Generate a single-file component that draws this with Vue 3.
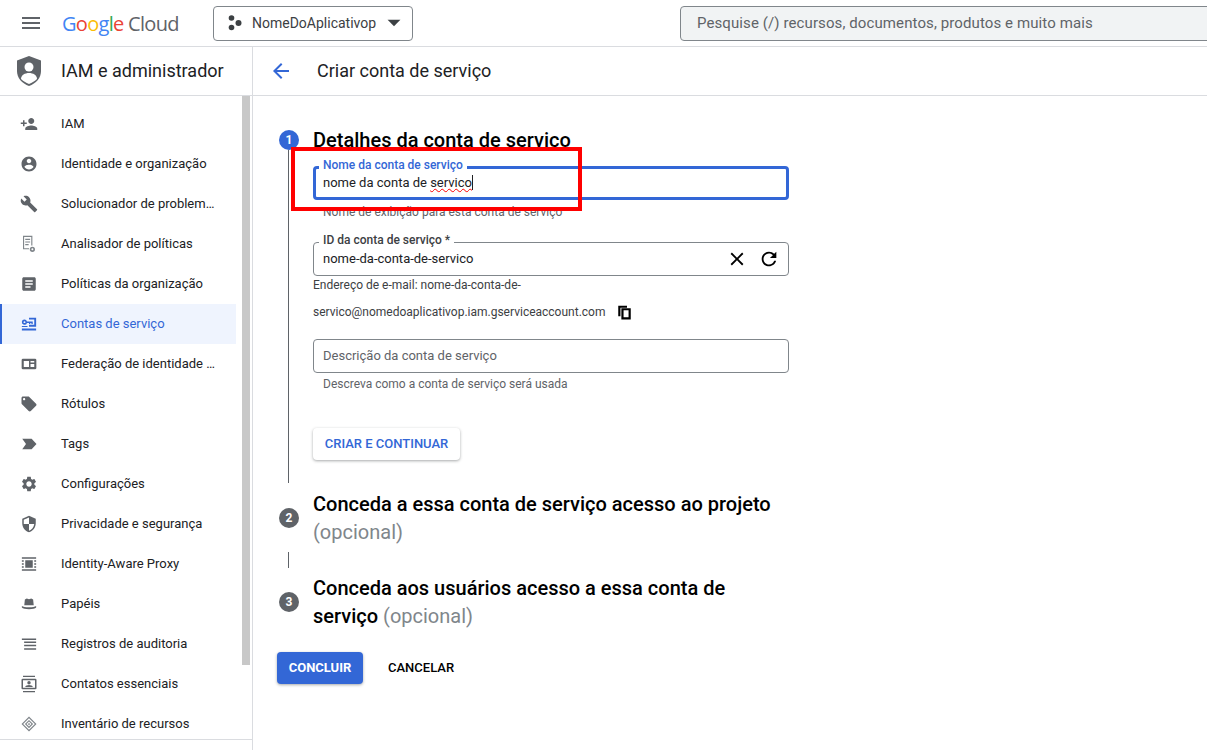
<script setup>
const nav = [
  { label: 'IAM', d: 'M15 12c2.21 0 4-1.79 4-4s-1.79-4-4-4-4 1.79-4 4 1.79 4 4 4zm-9-2V7H4v3H1v2h3v3h2v-3h3v-2H6zm9 4c-2.67 0-8 1.34-8 4v2h16v-2c0-2.66-5.33-4-8-4z' },
  { label: 'Identidade e organização', d: 'M12 2C6.48 2 2 6.48 2 12s4.48 10 10 10 10-4.48 10-10S17.52 2 12 2zm0 3c1.66 0 3 1.34 3 3s-1.34 3-3 3-3-1.34-3-3 1.34-3 3-3zm0 14.2c-2.5 0-4.71-1.28-6-3.22.03-1.99 4-3.08 6-3.08 1.99 0 5.97 1.09 6 3.08-1.29 1.94-3.5 3.22-6 3.22z' },
  { label: 'Solucionador de problem…', d: 'M22.7 19l-9.1-9.1c.9-2.3.4-5-1.5-6.9-2-2-5-2.4-7.4-1.3L9 6 6 9 1.6 4.7C.4 7.1.9 10.1 2.9 12.1c1.9 1.9 4.6 2.4 6.9 1.5l9.1 9.1c.4.4 1 .4 1.4 0l2.3-2.3c.5-.4.5-1.1.1-1.4z' },
  { label: 'Analisador de políticas', soft: true, d: 'M4 1h12.500v13h-1.500V2.500H5.500v15H12V19H4V1zm3 4h6.500v1.500H7V5zm0 3.500h6.500V10H7V8.500zM7 12h4.500v1.500H7V12zm9.500 3.500a3.500 3.500 0 1 1 0 7 3.500 3.500 0 0 1 0-7zm0 2.200a1.300 1.300 0 1 0 0 2.600 1.300 1.300 0 0 0 0-2.600z' },
  { label: 'Políticas da organização', d: 'M19 3H5c-1.1 0-2 .9-2 2v14c0 1.1.9 2 2 2h14c1.1 0 2-.9 2-2V5c0-1.1-.9-2-2-2zm-5 14H7v-2h7v2zm3-4H7v-2h10v2zm0-4H7V7h10v2z' },
  { label: 'Contas de serviço', active: true, d: 'M2.500 18h19v2.500h-19V18zM12 3.500h9.500V15.500H12V13h7V6h-7V3.500zM6 6a3.500 3.500 0 0 1 3.300 2.500H17V12h-1.800v-1.500h-1.500V12H12v-1.500H9.300A3.500 3.500 0 1 1 6 6zm0 2.200a1.300 1.300 0 1 0 0 2.600 1.300 1.300 0 0 0 0-2.600zM2.500 14.500H10v1.500H2.500v-1.500z' },
  { label: 'Federação de identidade …', d: 'M4 5h16a1.800 1.800 0 0 1 1.800 1.800v10.400A1.800 1.800 0 0 1 20 19H4a1.800 1.800 0 0 1-1.800-1.800V6.800A1.800 1.800 0 0 1 4 5zm1 3v8h7V8H5zm9 0v2h5V8h-5zm0 4v4h5v-4h-5z' },
  { label: 'Rótulos', d: 'M21.41 11.58l-9-9C12.05 2.22 11.55 2 11 2H4c-1.1 0-2 .9-2 2v7c0 .55.22 1.05.59 1.42l9 9c.36.36.86.58 1.41.58.55 0 1.05-.22 1.41-.59l7-7c.37-.36.59-.86.59-1.41 0-.55-.23-1.06-.59-1.42zM5.5 7C4.67 7 4 6.33 4 5.5S4.67 4 5.5 4 7 4.67 7 5.500 6.33 7 5.5 7z' },
  { label: 'Tags', d: 'M3 5h12.500L22 12l-6.500 7H3l5-7-5-7z' },
  { label: 'Configurações', d: 'M19.14 12.94c.04-.3.06-.61.06-.94 0-.32-.02-.64-.07-.94l2.03-1.58c.18-.14.23-.41.12-.61l-1.92-3.32c-.12-.22-.37-.29-.59-.22l-2.39.96c-.5-.38-1.03-.7-1.62-.94l-.36-2.54c-.04-.24-.24-.41-.48-.41h-3.84c-.24 0-.43.17-.47.41l-.36 2.54c-.59.24-1.13.57-1.62.94l-2.39-.96c-.22-.08-.47 0-.59.22L2.74 8.87c-.12.21-.08.47.12.61l2.03 1.58c-.05.3-.09.63-.09.94s.02.64.07.94l-2.03 1.58c-.18.14-.23.41-.12.61l1.92 3.32c.12.22.37.29.59.22l2.39-.96c.5.38 1.03.7 1.62.94l.36 2.54c.05.24.24.41.48.41h3.84c.24 0 .44-.17.47-.41l.36-2.54c.59-.24 1.13-.56 1.62-.94l2.39.96c.22.08.47 0 .59-.22l1.92-3.32c.12-.22.07-.47-.12-.61l-2.01-1.58zM12 15.6c-1.98 0-3.6-1.62-3.6-3.6s1.62-3.6 3.6-3.6 3.6 1.62 3.6 3.6-1.62 3.6-3.6 3.6z' },
  { label: 'Privacidade e segurança', d: 'M12 1L3 5v6c0 5.55 3.84 10.74 9 12 5.16-1.26 9-6.45 9-12V5l-9-4zm0 10.99h7c-.53 4.12-3.28 7.79-7 8.94V12H5V6.3l7-3.11v8.8z' },
  { label: 'Identity-Aware Proxy', d: 'M2.500 3h19v2h-19V3zm0 16h19v2h-19v-2zM7 7h10v10H7V7zM2.500 7H5v2H2.500V7zm0 4H5v2H2.500v-2zm0 4H5v2H2.500v-2zM19 7h2.500v2H19V7zm0 4h2.500v2H19v-2zm0 4h2.500v2H19v-2z' },
  { label: 'Papéis', d: 'M6.500 6 9 4.500l3 1 3-1L17.500 6l.8 7.500H5.700L6.500 6zM2.500 14.500c1.500 1.300 5 1.800 9.500 1.800s8-.5 9.500-1.800v2.300c-1 1.700-5 2.200-9.500 2.200s-8.500-.5-9.500-2.200v-2.300z' },
  { label: 'Registros de auditoria', d: 'M2.500 4.500h19v2h-19v-2zm3 4.200h16v2h-16v-2zm0 4.300h16v2h-16v-2zm0 4.500h16v2h-16v-2z' },
  { label: 'Contatos essenciais', d: 'M4 1h16v1.800H4V1zm0 20.200h16V23H4v-1.800zM3.500 5h17A1.500 1.500 0 0 1 22 6.500v11a1.500 1.500 0 0 1-1.500 1.500h-17A1.500 1.500 0 0 1 2 17.500v-11A1.500 1.500 0 0 1 3.500 5zM4 7v10h16V7H4zm8 1a2.300 2.300 0 1 1 0 4.600A2.300 2.300 0 0 1 12 8zm-5 8c0-1.700 3-2.600 5-2.600s5 .9 5 2.600H7z' },
  { label: 'Inventário de recursos', soft: true, d: 'M12 2l10 10-10 10L2 12 12 2zm0 2.200L4.200 12l7.800 7.800 7.800-7.800L12 4.200zm0 2.300L17.500 12 12 17.500 6.500 12 12 6.500zm0 2.200L8.700 12l3.300 3.300 3.300-3.300L12 8.700zm0 1.800l1.500 1.500-1.500 1.500-1.500-1.500 1.500-1.500z' }
]
</script>

<template>
  <div class="page">
    <header class="top">
      <svg class="menu" viewBox="0 0 24 24"><path d="M3 18h18v-2H3v2zm0-5h18v-2H3v2zm0-7v2h18V6H3z" /></svg>
      <div class="logo"><span class="b">G</span><span class="r">o</span><span class="y">o</span><span class="b">g</span><span class="g">l</span><span class="r">e</span><span class="cloud"> Cloud</span></div>
      <div class="project">
        <svg class="dots" viewBox="0 0 14 16"><circle cx="3.500" cy="3" r="2.800" /><circle cx="3.500" cy="12.500" r="2.800" /><circle cx="10.500" cy="8" r="3" /></svg>
        <span class="pname">NomeDoAplicativop</span>
        <svg class="caret" viewBox="0 0 24 24"><path d="M5 8.500l7 7 7-7z" /></svg>
      </div>
      <div class="search">Pesquise (/) recursos, documentos, produtos e muito mais</div>
    </header>

    <div class="body">
      <aside class="side">
        <div class="side-head">
          <svg class="shield" viewBox="0 0 24 30">
            <path class="sh" d="M12 0 24 4.500V15c0 7-5 12.500-12 15C5 27.500 0 22 0 15V4.500L12 0z" />
            <circle class="wh" cx="12" cy="11" r="4.500" />
            <path class="wh" d="M4 23c0-4 4-6 8-6s8 2 8 6c-2 2-5 3.800-8 5-3-1.200-6-3-8-5z" />
          </svg>
          <span class="lift">IAM e administrador</span>
        </div>
        <div class="side-scroll">
          <ul class="nav">
            <li v-for="item in nav" :key="item.label" :class="['nav-row', { on: item.active }]">
              <svg :class="['nav-ic', { soft: item.soft }]" viewBox="0 0 24 24"><path :d="item.d" fill-rule="evenodd" /></svg>
              <span class="nav-txt lift">{{ item.label }}</span>
            </li>
          </ul>
          <div class="track"><div class="thumb"></div></div>
        </div>
        <div class="side-foot"></div>
      </aside>

      <main class="main">
        <div class="bar">
          <svg class="back" viewBox="0 0 24 24"><path d="M20 11H7.830l5.590-5.590L12 4l-8 8 8 8 1.410-1.410L7.830 13H20v-2z" /></svg>
          <h1 class="lift">Criar conta de serviço</h1>
        </div>

        <div class="content">
          <div class="step-head first">
            <span class="num blue">1</span>
            <h2>Detalhes da conta de serviço</h2>
          </div>

          <div class="rail">
            <div class="field focus">
              <label class="lab">Nome da conta de serviço</label>
              <span class="val lift">nome da conta de <span class="typo">servico</span><i class="cursor"></i></span>
            </div>
            <p class="hint h1">Nome de exibição para esta conta de serviço</p>

            <div class="field f2">
              <label class="lab dark">ID da conta de serviço *</label>
              <span class="val lift">nome-da-conta-de-servico</span>
              <svg class="act x" viewBox="0 0 24 24"><path d="M19 6.410L17.590 5 12 10.590 6.410 5 5 6.410 10.590 12 5 17.590 6.410 19 12 13.410 17.590 19 19 17.590 13.410 12z" /></svg>
              <svg class="act" viewBox="0 0 24 24"><path d="M17.650 6.350C16.200 4.900 14.210 4 12 4c-4.420 0-7.990 3.580-7.990 8s3.570 8 7.990 8c3.730 0 6.840-2.550 7.730-6h-2.080c-.82 2.330-3.040 4-5.650 4-3.310 0-6-2.690-6-6s2.690-6 6-6c1.660 0 3.140.69 4.220 1.780L13 11h7V4l-2.350 2.350z" /></svg>
            </div>
            <p class="mail">Endereço de e-mail: nome-da-conta-de-</p>
            <p class="mail m2">servico@nomedoaplicativop.iam.gserviceaccount.com
              <svg class="copy" viewBox="0 0 24 24"><path fill-rule="evenodd" d="M16 1H2v17h3.500V4.500H16V1zm6 4H7v18h15V5zm-3.500 14.500h-8v-11h8v11z" /></svg>
            </p>

            <div class="field f3">
              <span class="val ph lift">Descrição da conta de serviço</span>
            </div>
            <p class="hint h3">Descreva como a conta de serviço será usada</p>

            <button class="raised">CRIAR E CONTINUAR</button>
          </div>

          <div class="step-head s2">
            <span class="num">2</span>
            <h2>Conceda a essa conta de serviço acesso ao projeto <em>(opcional)</em></h2>
          </div>
          <div class="conn"></div>
          <div class="step-head s3">
            <span class="num">3</span>
            <h2>Conceda aos usuários acesso a essa conta de serviço <em>(opcional)</em></h2>
          </div>

          <div class="actions">
            <button class="primary">CONCLUIR</button>
            <button class="flat">CANCELAR</button>
          </div>
        </div>
      </main>
    </div>

    <div class="redbox"></div>
  </div>
</template>

<style>
html, body { margin: 0; overflow: hidden; background: #fff; }
</style>

<style scoped>
.page { position: relative; width: 1207px; height: 750px; overflow: hidden; font-family: Roboto, "Liberation Sans", sans-serif; color: #202124; display: flex; flex-direction: column; }
.lift { padding-bottom: 2px; }
.top { height: 46px; flex: none; display: flex; align-items: center; border-bottom: 1px solid #dadce0; }
.menu { width: 24px; height: 24px; margin-left: 19px; fill: #5f6368; flex: none; }
.logo { margin-left: 19px; width: 151px; font-family: "Open Sans", sans-serif; font-size: 20px; letter-spacing: -0.7px; white-space: pre; flex: none; }
.b { color: #4285f4; } .r { color: #ea4335; } .y { color: #fbbc05; } .g { color: #34a853; } .cloud { color: #5f6368; }
.project { width: 200px; height: 35px; box-sizing: border-box; border: 1px solid #80868b; border-radius: 4px; display: flex; align-items: center; flex: none; padding-left: 14px; color: #3c4043; font-size: 14px; }
.dots { width: 14px; height: 16px; fill: #3c4043; flex: none; }
.pname { margin-left: 10px; width: 131px; }
.caret { width: 22px; height: 22px; fill: #3c4043; flex: none; }
.search { margin-left: 267px; flex: none; width: 560px; height: 35px; box-sizing: border-box; border: 1px solid #80868b; border-radius: 4px; background: #f1f3f4; padding-left: 16px; color: #5f6368; font-size: 15px; letter-spacing: .1px; line-height: 33px; }

.body { flex: 1; display: flex; min-height: 0; }
.side { width: 253px; box-sizing: border-box; flex: none; border-right: 1px solid #dadce0; display: flex; flex-direction: column; }
.side-head { height: 49px; box-sizing: border-box; flex: none; border-bottom: 1px solid #dadce0; display: flex; align-items: center; padding-left: 17px; font-size: 18px; color: #202124; }
.shield { width: 24px; height: 30px; flex: none; margin-right: 20px; }
.sh { fill: #5f6368; } .wh { fill: #fff; }
.side-scroll { flex: 1; min-height: 0; display: flex; justify-content: space-between; overflow: hidden; }
.nav { list-style: none; margin: 0; padding: 8px 0 0; width: 236px; }
.nav-row { height: 40px; display: flex; align-items: center; padding-left: 20px; box-sizing: border-box; font-size: 13px; color: #202124; }
.nav-row.on { background: #eff4fe; color: #3367d6; box-shadow: inset 2px 0 0 #3367d6; }
.nav-ic { width: 18px; height: 18px; fill: #5f6368; flex: none; margin-right: 23px; }
.nav-ic.soft { fill: #80868b; }
.on .nav-ic { fill: #3367d6; }
.nav-txt { white-space: nowrap; }
.track { width: 10px; flex: none; }
.thumb { width: 8px; height: 569px; background: #c8c8c8; }
.side-foot { height: 10px; flex: none; border-top: 1px solid #dadce0; }

.main { flex: 1; min-width: 0; }
.bar { height: 49px; box-sizing: border-box; border-bottom: 1px solid #dadce0; display: flex; align-items: center; padding-left: 16px; }
.back { width: 24px; height: 24px; fill: #3367d6; flex: none; margin-right: 24px; }
h1 { margin: 0; font-size: 18px; font-weight: 400; color: #202124; }
.content { padding: 34px 0 0 24px; }
.step-head { display: flex; align-items: center; margin-left: 2px; }
.num { width: 20px; height: 20px; border-radius: 50%; background: #5f6368; color: #fff; font-size: 12px; font-weight: 700; line-height: 20px; text-align: center; flex: none; margin-right: 14px; }
.num.blue { background: #3367d6; }
h2 { margin: 0; font-size: 20px; font-weight: 500; line-height: 28px; width: 476px; color: #000; }
h2 em { font-style: normal; font-weight: 400; color: #80868b; }
.first h2 { line-height: 20px; }
.rail { margin-left: 11px; border-left: 1px solid #5f6368; padding: 16px 0 23px 24px; width: 476px; }
.field { position: relative; height: 34px; box-sizing: border-box; border: 1px solid #80868b; border-radius: 4px; display: flex; align-items: center; padding-left: 9px; font-size: 13px; }
.field.focus { border: 3px solid #3367d6; padding-left: 7px; }
.lab { position: absolute; top: -10px; left: 5px; padding: 0 4px; background: #fff; font-size: 12px; line-height: 14px; color: #3367d6; font-weight: 500; white-space: nowrap; }
.focus .lab { top: -11px; left: 3px; }
.lab.dark { color: #3c4043; font-weight: 500; }
.val { flex: 1; color: #202124; }
.val.ph { color: #5f6368; }
.typo { text-decoration: underline wavy #f00 1px; text-underline-offset: 1px; }
.cursor { display: inline-block; width: 1px; height: 15px; background: #202124; vertical-align: -3px; }
.act { width: 22px; height: 22px; fill: #000; flex: none; margin-right: 8px; }
.act.x { margin-right: 10px; }
.hint { margin: 0; padding-left: 10px; font-size: 12px; line-height: 14px; color: #5f6368; }
.h1 { margin-top: 5px; }
.f2 { margin-top: 23px; }
.mail { margin: 0; font-size: 12px; line-height: 18px; color: #3c4043; display: flex; align-items: center; }
.m2 { margin-top: 9px; }
.copy { width: 15px; height: 15px; fill: #000; margin-left: 12px; flex: none; }
.f3 { margin-top: 18px; }
.h3 { margin-top: 4px; }
.raised { display: block; margin-top: 37px; width: 147px; height: 32px; border: 0; border-radius: 4px; background: #fff; color: #3367d6; font: 500 13px Roboto, sans-serif; box-shadow: 0 1px 3px rgba(60,64,67,.45); padding: 0 0 2px; }
.s2 { margin-top: 7px; }
.conn { margin: 6px 0 0 11px; width: 1px; height: 16px; background: #5f6368; }
.s3 { margin-top: 6px; }
.actions { margin-top: 22px; display: flex; align-items: center; }
.primary { width: 86px; height: 32px; border: 0; border-radius: 4px; background: #3367d6; color: #fff; font: 700 13px Roboto, sans-serif; box-shadow: 0 1px 3px rgba(60,64,67,.45); padding: 0 0 2px; }
.flat { margin-left: 25px; border: 0; background: none; padding: 0 0 2px; color: #000; font: 500 13px Roboto, sans-serif; }
.redbox { position: absolute; left: 291px; top: 147px; width: 291px; height: 64px; box-sizing: border-box; border: 4px solid #ff0000; pointer-events: none; }
</style>
